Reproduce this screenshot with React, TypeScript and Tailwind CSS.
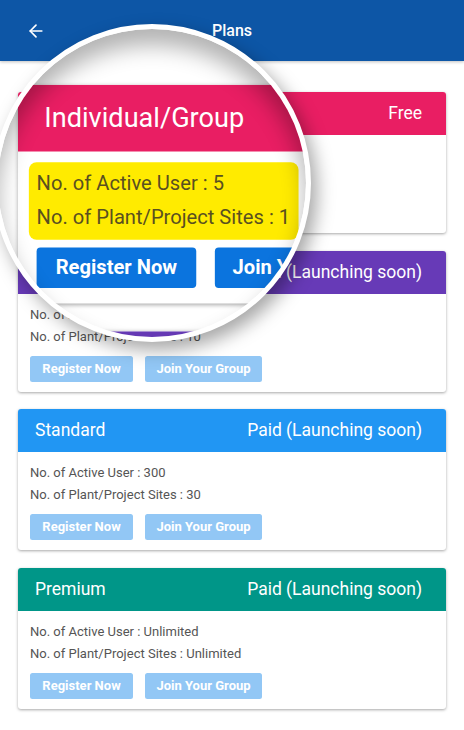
import { ArrowLeft } from "lucide-react";

type Plan = {
  name: string;
  price: string;
  color: string;
  users: string;
  sites: string;
  active: boolean;
};

const plans: Plan[] = [
  { name: "Individual/Group", price: "Free", color: "bg-[#e91e63]", users: "5", sites: "1", active: true },
  { name: "Corporate", price: "Paid (Launching soon)", color: "bg-[#673ab7]", users: "50", sites: "10", active: false },
  { name: "Standard", price: "Paid (Launching soon)", color: "bg-[#2196f3]", users: "300", sites: "30", active: false },
  { name: "Premium", price: "Paid (Launching soon)", color: "bg-[#009688]", users: "Unlimited", sites: "Unlimited", active: false },
];

function PlanCard({ plan, highlight }: { plan: Plan; highlight: boolean }) {
  const btn = plan.active ? "bg-[#0b74de]" : "bg-[#92c7f5]";

  return (
    <div className="rounded-[3px] bg-white shadow-[0_1px_3px_rgba(0,0,0,0.35)] overflow-hidden">
      <div className={`${plan.color} h-[43px] pl-[17px] pr-[24px] flex items-center justify-between text-white text-[17.5px]`}>
        <span>{plan.name}</span>
        <span>{plan.price}</span>
      </div>

      <div className="px-[12px] pt-[10px] pb-[10px]">
        <div
          className={
            highlight
              ? "w-fit -mx-[5px] -my-[3px] px-[5px] py-[3px] rounded-[5px] bg-[#ffeb00] text-[#5a5020]"
              : "text-[#555]"
          }
        >
          <p className="text-[13px] leading-[22px]">No. of Active User : {plan.users}</p>
          <p className="text-[13px] leading-[22px]">No. of Plant/Project Sites : {plan.sites}</p>
        </div>

        <div className="mt-[8px] flex gap-[12px]">
          <button className={`${btn} h-[26px] w-[103px] rounded-[2.5px] text-white text-[13px] font-bold`}>
            Register Now
          </button>
          <button className={`${btn} h-[26px] w-[117px] rounded-[2.5px] text-white text-[13px] font-bold`}>
            Join Your Group
          </button>
        </div>
      </div>
    </div>
  );
}

function PlanList({ highlight }: { highlight: boolean }) {
  return (
    <main className="px-[18px] pt-[31px] pb-[20px] flex flex-col gap-[17.5px]">
      {plans.map((plan, i) => (
        <PlanCard key={plan.name} plan={plan} highlight={highlight && i === 0} />
      ))}
    </main>
  );
}

export default function App() {
  return (
    <div className="relative min-h-screen w-full overflow-hidden bg-white font-['Roboto',sans-serif]">
      <header className="h-[61px] bg-[#0d56a6] grid grid-cols-[1fr_auto_1fr] items-center px-[26px] shadow-[0_1px_3px_rgba(0,0,0,0.25)]">
        <ArrowLeft size={20} strokeWidth={2} className="text-white" />
        <h1 className="text-white text-[16px] font-medium">Plans</h1>
        <span />
      </header>

      <PlanList highlight={false} />

      {/* magnifier lens */}
      <div className="absolute left-[-7px] top-[24px] w-[318px] h-[318px] rounded-full border-[5px] border-white overflow-hidden bg-white z-10 shadow-[6px_8px_18px_rgba(0,0,0,0.35)]">
        <div className="absolute left-[2px] top-[-29px] w-[464px] origin-[18px_105px] scale-[1.55]">
          <div className="h-[61px]" />
          <PlanList highlight={true} />
        </div>
        <div className="absolute inset-0 rounded-full shadow-[inset_0_16px_22px_rgba(0,0,0,0.3)]" />
      </div>
    </div>
  );
}
